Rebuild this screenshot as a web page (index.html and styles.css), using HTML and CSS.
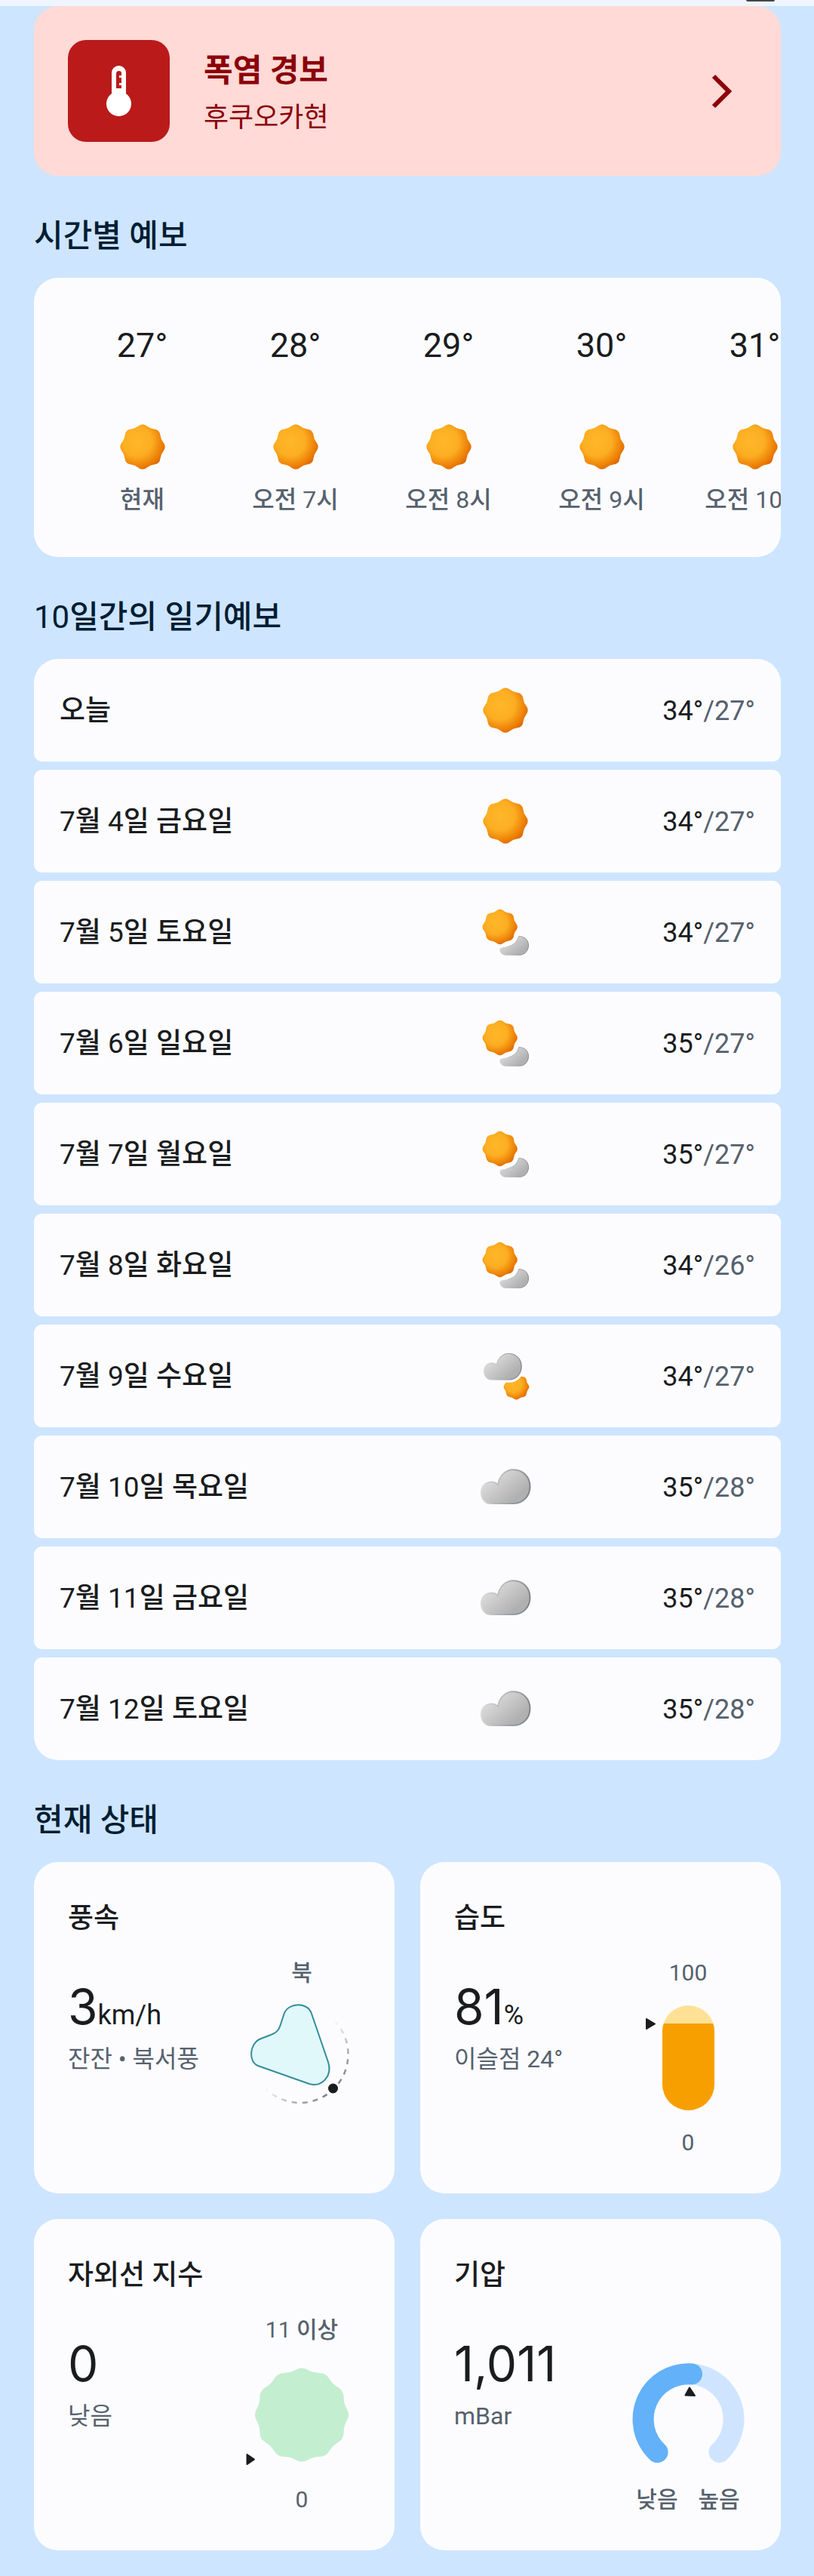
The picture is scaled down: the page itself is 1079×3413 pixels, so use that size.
FILE: index.html
```html
<!DOCTYPE html>
<html lang="ko">
<head>
    <meta charset="UTF-8">
    <meta name="viewport" content="width=device-width, initial-scale=1.0">
    <title>날씨</title>
    <link rel="stylesheet" href="styles.css">
</head>
<body>

    <!-- Weather icons -->
    <svg class="sprite" aria-hidden="true">
        <defs>
            <radialGradient id="sunFill" gradientUnits="userSpaceOnUse" cx="-7" cy="-7" r="39">
                <stop offset="0" stop-color="#ffb728"/>
                <stop offset="0.5" stop-color="#fcae22"/>
                <stop offset="0.85" stop-color="#ec7f06"/>
                <stop offset="1" stop-color="#dd6800"/>
            </radialGradient>
            <linearGradient id="cloudFill" x1="0" y1="0.2" x2="0.75" y2="0.8">
                <stop offset="0" stop-color="#e4e4e4"/>
                <stop offset="1" stop-color="#b0b0b0"/>
            </linearGradient>
            <linearGradient id="cloudEdge" x1="0" y1="0.4" x2="1" y2="0.6">
                <stop offset="0" stop-color="#dedede"/>
                <stop offset="1" stop-color="#7d8388"/>
            </linearGradient>
            <path id="sunShape" d="M-6.2-27.2Q0-32.2 6.2-27.2Q10-24.1 14.9-23.6Q22.8-22.8 23.6-14.9Q24.1-10 27.2-6.2Q32.2 0 27.2 6.2Q24.1 10 23.6 14.9Q22.8 22.8 14.9 23.6Q10 24.1 6.2 27.2Q0 32.2-6.2 27.2Q-10 24.1-14.9 23.6Q-22.8 22.8-23.6 14.9Q-24.1 10-27.2 6.2Q-32.2 0-27.2-6.2Q-24.1-10-23.6-14.9Q-22.8-22.8-14.9-23.6Q-10-24.1-6.2-27.2Z"/>
            <path id="cloudShape" d="M15 56C7 56 2 49.5 2 41.5C2 33 8 27.5 16 27.5C19 27.5 21.5 28.5 24 31C26 19 34 11.3 44.5 11.3C57.5 11.3 66.5 21 66.5 33.5C66.5 46 57.5 56 45 56Z"/>
        </defs>
        <symbol id="sunny" viewBox="0 0 68 68">
            <use href="#sunShape" x="34" y="34" fill="url(#sunFill)"/>
        </symbol>
        <symbol id="cloudy" viewBox="0 0 68 68">
            <use href="#cloudShape" fill="url(#cloudFill)" stroke="url(#cloudEdge)" stroke-width="2"/>
        </symbol>
        <symbol id="mostly-sunny" viewBox="0 0 68 68">
            <path d="M51.7 39.5C60 39.5 64.5 45 64.5 51.5C64.5 59 59 64.2 53 64.2L34 64.2C29 64.2 26 60 27 56C30 54 34 55 39 52.5C47 50 50 45 51.7 39.5Z" fill="url(#cloudFill)" stroke="url(#cloudEdge)"/>
            <use href="#sunShape" transform="translate(26.7 27) scale(0.78)" fill="url(#sunFill)"/>
        </symbol>
        <symbol id="mostly-cloudy" viewBox="0 0 68 68">
            <use href="#sunShape" transform="translate(48.5 48.5) scale(0.57)" fill="url(#sunFill)"/>
            <use href="#cloudShape" transform="translate(4 -4.3) scale(0.77)" fill="#fcfcff" stroke="#fcfcff" stroke-width="10"/>
            <use href="#cloudShape" transform="translate(4 -4.3) scale(0.77)" fill="url(#cloudFill)" stroke="url(#cloudEdge)" stroke-width="1.6"/>
        </symbol>
    </svg>

    <header class="topbar"><span class="topbar-chip"></span></header>

    <main class="container">

        <a class="alert" href="#alert">
            <svg class="alert-icon" viewBox="0 0 135 135" aria-hidden="true">
                <rect width="135" height="135" rx="24" fill="#ba1a1a"/>
                <path d="M58 43.5a9.5 9.5 0 0 1 19 0V71a16.5 16.5 0 1 1-19 0Z" fill="#fff"/>
                <path d="M64 45Q64 41 67.5 41Q71 41 71 44V47H68V50H71V57H68V60H71V64H64Z" fill="#ba1a1a"/>
            </svg>
            <div class="alert-text">
                <h1>폭염 경보</h1>
                <p>후쿠오카현</p>
            </div>
            <svg class="chevron" viewBox="0 0 64 64" aria-hidden="true">
                <path d="M20 12L40 32L20 52" fill="none" stroke="#8c0009" stroke-width="6"/>
            </svg>
        </a>

        <h2>시간별 예보</h2>
        <ul class="hourly">
            <li><span class="hour-temp">27°</span><svg class="hour-icon"><use href="#sunny"/></svg><span class="hour-label">현재</span></li>
            <li><span class="hour-temp">28°</span><svg class="hour-icon"><use href="#sunny"/></svg><span class="hour-label">오전 <span class="num">7</span>시</span></li>
            <li><span class="hour-temp">29°</span><svg class="hour-icon"><use href="#sunny"/></svg><span class="hour-label">오전 <span class="num">8</span>시</span></li>
            <li><span class="hour-temp">30°</span><svg class="hour-icon"><use href="#sunny"/></svg><span class="hour-label">오전 <span class="num">9</span>시</span></li>
            <li><span class="hour-temp">31°</span><svg class="hour-icon"><use href="#sunny"/></svg><span class="hour-label">오전 <span class="num">10</span>시</span></li>
        </ul>

        <h2><span class="num">10</span>일간의 일기예보</h2>
        <ul class="daily">
            <li><span>오늘</span><svg class="day-icon"><use href="#sunny"/></svg><span class="day-temp">34°<span class="low">/27°</span></span></li>
            <li><span><span class="num">7</span>월 <span class="num">4</span>일 금요일</span><svg class="day-icon"><use href="#sunny"/></svg><span class="day-temp">34°<span class="low">/27°</span></span></li>
            <li><span><span class="num">7</span>월 <span class="num">5</span>일 토요일</span><svg class="day-icon"><use href="#mostly-sunny"/></svg><span class="day-temp">34°<span class="low">/27°</span></span></li>
            <li><span><span class="num">7</span>월 <span class="num">6</span>일 일요일</span><svg class="day-icon"><use href="#mostly-sunny"/></svg><span class="day-temp">35°<span class="low">/27°</span></span></li>
            <li><span><span class="num">7</span>월 <span class="num">7</span>일 월요일</span><svg class="day-icon"><use href="#mostly-sunny"/></svg><span class="day-temp">35°<span class="low">/27°</span></span></li>
            <li><span><span class="num">7</span>월 <span class="num">8</span>일 화요일</span><svg class="day-icon"><use href="#mostly-sunny"/></svg><span class="day-temp">34°<span class="low">/26°</span></span></li>
            <li><span><span class="num">7</span>월 <span class="num">9</span>일 수요일</span><svg class="day-icon"><use href="#mostly-cloudy"/></svg><span class="day-temp">34°<span class="low">/27°</span></span></li>
            <li><span><span class="num">7</span>월 <span class="num">10</span>일 목요일</span><svg class="day-icon"><use href="#cloudy"/></svg><span class="day-temp">35°<span class="low">/28°</span></span></li>
            <li><span><span class="num">7</span>월 <span class="num">11</span>일 금요일</span><svg class="day-icon"><use href="#cloudy"/></svg><span class="day-temp">35°<span class="low">/28°</span></span></li>
            <li><span><span class="num">7</span>월 <span class="num">12</span>일 토요일</span><svg class="day-icon"><use href="#cloudy"/></svg><span class="day-temp">35°<span class="low">/28°</span></span></li>
        </ul>

        <h2>현재 상태</h2>
        <div class="conditions">

            <!-- Wind -->
            <section class="card">
                <h3>풍속</h3>
                <div class="card-body">
                    <div class="reading">
                        <p class="value">3<span class="unit">km/h</span></p>
                        <p class="note">잔잔 • 북서풍</p>
                    </div>
                    <div class="chart">
                        <span class="chart-label">북</span>
                        <svg viewBox="0 0 156 185" aria-hidden="true">
                            <defs>
                                <linearGradient id="arcFade" gradientUnits="userSpaceOnUse" x1="75" y1="88" x2="119" y2="133">
                                    <stop offset="0" stop-color="#44474e" stop-opacity="0"/>
                                    <stop offset="1" stop-color="#44474e" stop-opacity="0.65"/>
                                </linearGradient>
                            </defs>
                            <path d="M121 43A63.5 63.5 0 0 1 30 133" fill="none" stroke="url(#arcFade)" stroke-width="2.5" stroke-dasharray="7 7"/>
                            <path d="M55 33C61 19 86 18 91 34L113 98C119 116 105 132 88 127L20 103C7 98 8 73 24 67L37 62C43 60 47 57 49 51Z" fill="#e1f8fb" stroke="#348d98" stroke-width="2"/>
                            <circle cx="119.5" cy="133" r="6.5" fill="#1a1c1e"/>
                        </svg>
                    </div>
                </div>
            </section>

            <!-- Humidity -->
            <section class="card">
                <h3>습도</h3>
                <div class="card-body">
                    <div class="reading">
                        <p class="value">81<span class="unit">%</span></p>
                        <p class="note">이슬점 24°</p>
                    </div>
                    <div class="chart">
                        <span class="chart-label num">100</span>
                        <svg viewBox="0 0 156 185" aria-hidden="true">
                            <clipPath id="pill"><rect x="44" y="23" width="69" height="139" rx="34.5"/></clipPath>
                            <g clip-path="url(#pill)">
                                <rect x="44" y="23" width="69" height="139" fill="#ffe196"/>
                                <rect x="44" y="47" width="69" height="115" fill="#f79f00"/>
                            </g>
                            <path d="M23 41L34 47.5L23 54Z" fill="#1a1c1e" stroke="#1a1c1e" stroke-width="2" stroke-linejoin="round"/>
                        </svg>
                        <span class="chart-label num">0</span>
                    </div>
                </div>
            </section>

            <!-- UV index -->
            <section class="card">
                <h3>자외선 지수</h3>
                <div class="card-body">
                    <div class="reading">
                        <p class="value">0</p>
                        <p class="note">낮음</p>
                    </div>
                    <div class="chart">
                        <span class="chart-label"><span class="num">11</span> 이상</span>
                        <svg viewBox="0 0 156 185" aria-hidden="true">
                            <path transform="translate(78 92.5)" fill="#c4eed0" d="M-7.5-59.9Q0-64.1 7.5-59.9Q14.9-55.6 23.5-55.6Q32.1-55.5 36.4-48.1Q40.7-40.7 48.1-36.4Q55.5-32.1 55.6-23.5Q55.6-14.9 59.9-7.5Q64.1 0 59.9 7.5Q55.6 14.9 55.6 23.5Q55.5 32.1 48.1 36.4Q40.7 40.7 36.4 48.1Q32.1 55.5 23.5 55.6Q14.9 55.6 7.5 59.9Q0 64.1-7.5 59.9Q-14.9 55.6-23.5 55.6Q-32.1 55.5-36.4 48.1Q-40.7 40.7-48.1 36.4Q-55.5 32.1-55.6 23.5Q-55.6 14.9-59.9 7.5Q-64.1 0-59.9-7.5Q-55.6-14.9-55.6-23.5Q-55.5-32.1-48.1-36.4Q-40.7-40.7-36.4-48.1Q-32.1-55.5-23.5-55.6Q-14.9-55.6-7.5-59.9Z"/>
                            <path d="M5.5 145L15 151.5L5.5 158Z" fill="#1a1c1e" stroke="#1a1c1e" stroke-width="2" stroke-linejoin="round"/>
                        </svg>
                        <span class="chart-label num">0</span>
                    </div>
                </div>
            </section>

            <!-- Pressure -->
            <section class="card">
                <h3>기압</h3>
                <div class="card-body">
                    <div class="reading">
                        <p class="value">1,011</p>
                        <p class="note">mBar</p>
                    </div>
                    <div class="chart">
                        <svg viewBox="0 -40 156 225" aria-hidden="true">
                            <g fill="none" stroke-width="28" stroke-linecap="round">
                                <path d="M37.5 142A60 60 0 1 1 119.5 142" stroke="#cfe5ff"/>
                                <path d="M37.5 142A60 60 0 0 1 83 38.4" stroke="#63b1f9"/>
                            </g>
                            <path d="M80 56.5L74.5 66.5L87 67Z" fill="#1a1c1e" stroke="#1a1c1e" stroke-width="2" stroke-linejoin="round"/>
                        </svg>
                        <div class="chart-range">
                            <span class="chart-label">낮음</span>
                            <span class="chart-label">높음</span>
                        </div>
                    </div>
                </div>
            </section>

        </div>
    </main>

</body>
</html>
```

FILE: styles.css
```css
* {
    box-sizing: border-box;
}

body {
    font-family: Roboto, 'Noto Sans CJK KR', sans-serif;
    background-color: #cee5ff;
    color: #1a1c1e;
    margin: 0;
}

h1, h2, h3, p, ul {
    margin: 0;
    padding: 0;
    font-weight: 500;
}

ul {
    list-style: none;
}

.sprite {
    position: absolute;
    width: 0;
    height: 0;
}

.topbar {
    display: flex;
    justify-content: flex-end;
    height: 8px;
    padding-right: 52px;
    background-color: #eff5ff;
}

.topbar-chip {
    width: 38px;
    height: 2px;
    border-radius: 0 0 8px 8px;
    background-color: #44474a;
}

.container {
    padding: 0 44px 34px 45px;
}

h2 {
    margin: 50px 0 25px;
    font-size: 42px;
    line-height: 60px;
    color: #001d33;
}

/* Digits are lighter than the Hangul next to them */
.num {
    font-weight: 400;
}

/* Heat warning */
.alert {
    display: flex;
    align-items: center;
    gap: 45px;
    padding: 45px;
    border-radius: 32px;
    background-color: #ffdad6;
    color: #8c0009;
    text-decoration: none;
}

.alert-icon {
    width: 135px;
    height: 135px;
}

.alert-text {
    flex: 1;
    padding-top: 6px;
}

.alert h1 {
    font-size: 42px;
    line-height: 64px;
    font-weight: 700;
}

.alert p {
    font-size: 36px;
    line-height: 60px;
    font-weight: 400;
}

.chevron {
    width: 64px;
    height: 64px;
}

/* Hourly forecast */
.hourly {
    display: flex;
    overflow: hidden;
    padding: 58px 42px 54px;
    border-radius: 32px;
    background-color: #fcfcff;
}

.hourly li {
    display: flex;
    flex: 0 0 203px;
    flex-direction: column;
    align-items: center;
}

.hour-temp {
    font-size: 45px;
    line-height: 64px;
    font-weight: 400;
}

.hour-icon {
    width: 68px;
    height: 68px;
    margin: 68px 0 14px;
}

.hour-label {
    font-size: 32px;
    line-height: 44px;
    color: #56616d;
    white-space: nowrap;
}

/* 10 day forecast */
.daily {
    display: grid;
    gap: 11px;
}

.daily li {
    display: grid;
    grid-template-columns: 1fr 68px 297px;
    align-items: center;
    padding: 34px;
    border-radius: 11px;
    background-color: #fcfcff;
    font-size: 37px;
    line-height: 60px;
}

.daily li > span {
    padding-top: 2px;
}

.daily li:first-child {
    border-top-left-radius: 32px;
    border-top-right-radius: 32px;
}

.daily li:last-child {
    border-bottom-left-radius: 32px;
    border-bottom-right-radius: 32px;
}

.day-icon {
    width: 68px;
    height: 68px;
}

.day-temp {
    text-align: right;
    font-size: 36px;
    font-weight: 400;
}

.low {
    color: #56616d;
}

/* Current conditions */
.conditions {
    display: grid;
    grid-template-columns: 1fr 1fr;
    gap: 34px;
}

.card {
    padding: 47px 45px;
    border-radius: 32px;
    background-color: #fcfcff;
}

h3 {
    font-size: 37px;
    line-height: 56px;
}

.card-body {
    display: flex;
}

.reading {
    flex: 1;
    padding-top: 53px;
}

.value {
    font-family: Inter, 'Noto Sans CJK KR', sans-serif;
    font-size: 64px;
    line-height: 72px;
    font-weight: 400;
}

.unit {
    font-family: Roboto, sans-serif;
    font-size: 36px;
    line-height: 36px;
}

.note {
    margin-top: 11px;
    font-size: 32px;
    line-height: 44px;
    font-weight: 400;
    color: #56616d;
}

.chart {
    display: flex;
    flex-direction: column;
    align-items: center;
    width: 156px;
    padding-top: 24px;
}

.chart svg {
    width: 100%;
}

.chart-label {
    font-size: 30px;
    line-height: 40px;
    font-weight: 500;
    color: #56616d;
}

.chart-label.num {
    font-weight: 400;
}

.chart-range {
    display: flex;
    gap: 27px;
}
```
